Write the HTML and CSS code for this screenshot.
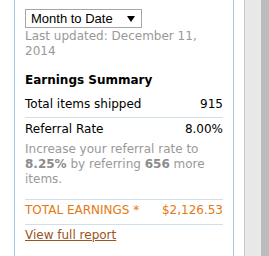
FILE: index.html
```html
<!DOCTYPE html>
<html lang="en">
<head>
    <meta charset="UTF-8">
    <title>Earnings</title>
    <link rel="stylesheet" href="styles.css">
</head>
<body>
    <div class="page">
        <div class="sidebar">
            <div class="earnings-box">
                <label class="select-wrap">
                    <select class="period-select">
                        <option>Month to Date</option>
                    </select>
                </label>
                <div class="updated">Last updated: December 11, 2014</div>

                <h3>Earnings Summary</h3>

                <div class="row">
                    <span>Total items shipped</span>
                    <span>915</span>
                </div>
                <div class="row">
                    <span>Referral Rate</span>
                    <span>8.00%</span>
                </div>
                <div class="hint">
                    Increase your referral rate to <b>8.25%</b> by referring <b>656</b> more items.
                </div>
                <div class="row total">
                    <span>TOTAL EARNINGS *</span>
                    <span>$2,126.53</span>
                </div>
                <a href="#" class="report-link">View full report</a>
            </div>
        </div>
        <div class="scroll-track"></div>
        <div class="scroll-edge"></div>
    </div>
</body>
</html>
```

FILE: styles.css
```css
body {
    margin: 0;
    font-family: "DejaVu Sans", Verdana, sans-serif;
    font-size: 12px;
    color: #000;
    background: #fff;
}

.page {
    display: flex;
    height: 256px;
    overflow: hidden;
}

.sidebar {
    padding-left: 14px;
    width: 220px;
    flex: none;
}

.earnings-box {
    height: 100%;
    box-sizing: border-box;
    border-left: 1px solid #a3c9e3;
    border-right: 1px solid #a3c9e3;
    padding: 9px 10px 0 10px;
}

.select-wrap {
    position: relative;
    display: block;
    width: 117px;
    height: 19px;
}

.select-wrap::after {
    content: "";
    position: absolute;
    left: 102px;
    top: 7px;
    border-left: 4px solid transparent;
    border-right: 4px solid transparent;
    border-top: 6px solid #000;
    pointer-events: none;
}

.period-select {
    appearance: none;
    -webkit-appearance: none;
    font-family: "Liberation Sans", Arial, sans-serif;
    font-size: 13px;
    width: 117px;
    height: 19px;
    padding: 0 0 0 5px;
    margin: 0;
    border: 1px solid #a6a6a6;
    border-radius: 0;
    background: #fff;
    color: #000;
}

.updated {
    color: #999;
    line-height: 15px;
    margin-top: 1px;
}

h3 {
    font-size: 12px;
    line-height: 15px;
    margin: 14px 0 5px 0;
}

.row {
    display: flex;
    justify-content: space-between;
    line-height: 15px;
    padding: 4px 0 5px 0;
}

.row + .row {
    border-top: 1px solid #cfe0ea;
}

.hint {
    color: #999;
    line-height: 15px;
    padding-bottom: 12px;
    border-bottom: 1px solid #cfe0ea;
}

.hint b {
    color: #8c8c8c;
}

.total {
    color: #e47911;
    padding: 3px 0 6px 0;
    border-bottom: 1px solid #cfe0ea;
}

.report-link {
    display: inline-block;
    margin-top: 3px;
    color: #9c521a;
    line-height: 15px;
}

.scroll-track {
    margin-left: 10px;
    width: 16px;
    border-left: 1px solid #c9c9c9;
    background: #e8e8e8;
}

.scroll-edge {
    width: 8px;
    background: #bcbcbc;
}
```
